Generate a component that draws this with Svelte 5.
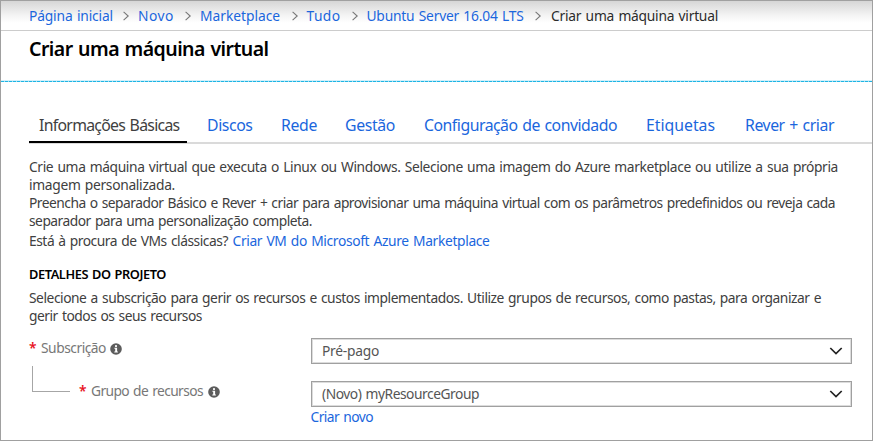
<script>
  const crumbs = [
    { text: 'Página inicial', width: 84, gap: 10 },
    { text: 'Novo', width: 36, gap: 11 },
    { text: 'Marketplace', width: 80, gap: 11.5 },
    { text: 'Tudo', width: 34, gap: 11 },
    { text: 'Ubuntu Server 16.04 LTS', width: 157, gap: 11.5 },
  ];

  const tabs = [
    { text: 'Informações Básicas', width: 140.5, left: 10, active: true },
    { text: 'Discos', width: 45.5, left: 20.5 },
    { text: 'Rede', width: 36, left: 28.5 },
    { text: 'Gestão', width: 50, left: 28 },
    { text: 'Configuração de convidado', width: 193, left: 29 },
    { text: 'Etiquetas', width: 69, left: 29 },
    { text: 'Rever + criar', width: 89, left: 30 },
  ];

  // Spreads the letters of a single line so that it fills the given width.
  function fit(node, width) {
    const natural = node.getBoundingClientRect().width;
    node.style.letterSpacing = `${(width - natural) / node.textContent.length}px`;
  }
</script>

{#snippet info()}
  <svg class="info" viewBox="0 0 12 12" width="12" height="12" aria-hidden="true">
    <circle cx="6" cy="6" r="5.8" fill="#5c5c5c" />
    <rect x="5" y="2.2" width="2" height="1.7" fill="#fff" />
    <path d="M4.4 4.8h2.7v3.7h.8v1H4.3v-1h.9V5.8h-.8z" fill="#fff" />
  </svg>
{/snippet}

{#snippet select(text, width)}
  <div class="select">
    <span use:fit={width}>{text}</span>
    <svg viewBox="0 0 14 8" width="14" height="8" aria-hidden="true">
      <path d="M1.3 1 7 6.6 12.7 1" fill="none" stroke="#222" stroke-width="1.7" />
    </svg>
  </div>
{/snippet}

<main>
  <nav class="crumbs">
    {#each crumbs as crumb}
      <a href="#top" use:fit={crumb.width}>{crumb.text}</a>
      <svg style="margin-left: {crumb.gap}px" viewBox="0 0 6 10" width="6" height="10" aria-hidden="true">
        <path d="M.6.8 5.2 5 .6 9.2" fill="none" stroke="#777" stroke-width="1.1" />
      </svg>
    {/each}
    <span use:fit={167}>Criar uma máquina virtual</span>
  </nav>

  <header><h1 use:fit={239.5}>Criar uma máquina virtual</h1></header>
  <div class="dashes"></div>

  <div class="tabs">
    {#each tabs as tab}
      <div class="tab" class:active={tab.active} style="padding-left: {tab.left}px">
        <span use:fit={tab.width}>{tab.text}</span>
      </div>
    {/each}
  </div>

  <section class="intro">
    <p><span use:fit={809}>Crie uma máquina virtual que executa o Linux ou Windows. Selecione uma imagem do Azure marketplace ou utilize a sua própria</span></p>
    <p class="second"><span use:fit={146}>imagem personalizada.</span></p>
    <p class="third"><span use:fit={806}>Preencha o separador Básico e Rever + criar para aprovisionar uma máquina virtual com os parâmetros predefinidos ou reveja cada</span></p>
    <p><span use:fit={283}>separador para uma personalização completa.</span></p>
    <p class="last"><span use:fit={199}>Está à procura de VMs clássicas?</span><a href="#vm" use:fit={257}>Criar VM do Microsoft Azure Marketplace</a></p>
  </section>

  <section class="project">
    <h2><span use:fit={137}>DETALHES DO PROJETO</span></h2>
    <p><span use:fit={792}>Selecione a subscrição para gerir os recursos e custos implementados. Utilize grupos de recursos, como pastas, para organizar e</span></p>
    <p><span use:fit={173}>gerir todos os seus recursos</span></p>
  </section>

  <form>
    <div class="row">
      <div class="label"><b>*</b><span use:fit={65}>Subscrição</span>{@render info()}</div>
      {@render select('Pré-pago', 57)}
    </div>
    <div class="row child">
      <div class="label"><i></i><b>*</b><span use:fit={112}>Grupo de recursos</span>{@render info()}</div>
      {@render select('(Novo) myResourceGroup', 157)}
    </div>
    <a class="new" href="#new"><span use:fit={62.5}>Criar novo</span></a>
  </form>
</main>

<style>
  main {
    box-sizing: border-box;
    width: 873px;
    height: 441px;
    border: 1px solid #a0a0a0;
    background: #fff;
    color: #404040;
    font: 13.8px/18px 'Noto Sans', 'Open Sans', sans-serif;
    word-spacing: 1px;
    white-space: nowrap;
    overflow: hidden;
  }
  a {
    color: #1a66dd;
    text-decoration: none;
  }
  span,
  h1 {
    display: inline-block;
  }
  h1,
  h2,
  p {
    margin: 0;
  }
  p {
    height: 18px;
  }
  svg {
    display: block;
    flex: none;
  }
  .crumbs {
    display: flex;
    align-items: center;
    height: 29px;
    padding-left: 28px;
    border-bottom: 1px solid #ccc;
    background: linear-gradient(#d6d6d6, #f4f4f4 50%, #fff 75%);
  }
  .crumbs svg {
    margin-right: 9px;
  }
  .crumbs span {
    margin-left: 1px;
    color: #2b2b2b;
  }
  header {
    height: 49px;
    padding-left: 28px;
  }
  h1 {
    margin-top: 6px;
    color: #000;
    font-size: 19.5px;
    font-weight: 600;
    line-height: 24px;
  }
  .dashes {
    height: 1px;
    border-top: 1px solid #d3f0fa;
    background: repeating-linear-gradient(90deg, #1fb5e4 0 3px, #a5e0f3 3px 4px);
  }
  .tabs {
    display: flex;
    height: 62px;
    margin-left: 28px;
    box-shadow: inset 0 -2px #dadada;
    color: #1a66dd;
    font-size: 15.8px;
  }
  .tab {
    box-sizing: border-box;
    padding-top: 33px;
    line-height: 20px;
  }
  .tab.active {
    height: 61px;
    padding-right: 7px;
    border-bottom: 2px solid #000;
    color: #404040;
  }
  .intro {
    padding: 14px 0 0 28px;
  }
  .intro .third {
    margin-top: 0;
  }
  .intro .last {
    display: flex;
    gap: 4.5px;
    margin-top: 2px;
  }
  .project {
    padding: 15px 0 0 28px;
  }
  h2 {
    height: 18px;
    margin-bottom: 6px;
    color: #000;
    font-size: 12.8px;
    font-weight: 600;
    line-height: 18px;
  }
  form {
    padding: 13px 0 0 28px;
  }
  .row {
    display: flex;
    align-items: flex-start;
    height: 43px;
  }
  .label {
    display: flex;
    align-items: center;
    width: 282px;
    height: 20px;
    color: #777;
  }
  .label b {
    width: 12px;
    color: #e81123;
    font-weight: 600;
  }
  .label .info {
    margin: 2px 0 0 4px;
  }
  .child .info {
    margin-left: 5px;
  }
  .label i {
    box-sizing: border-box;
    width: 38px;
    height: 26px;
    margin: -25px 9px 0 3px;
    border: solid #a6a6a6;
    border-width: 0 0 1px 1px;
  }
  .select {
    box-sizing: border-box;
    display: flex;
    align-items: center;
    justify-content: space-between;
    width: 541px;
    height: 26px;
    padding: 0 8px 0 10px;
    border: 1px solid #a0a0a0;
    box-shadow: inset 0 0 0 1px #dcdcdc;
    color: #555;
  }
  .new {
    display: block;
    margin: -16px 0 0 281.5px;
  }
</style>
